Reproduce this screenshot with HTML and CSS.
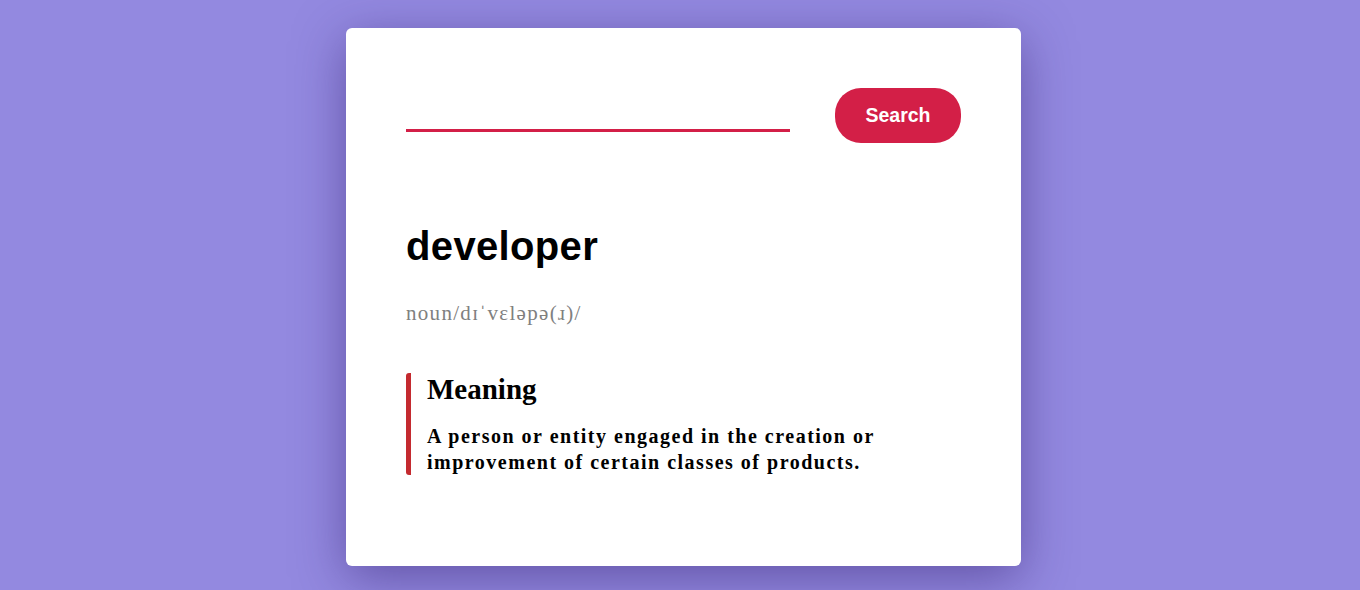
FILE: index.html
```html
<!DOCTYPE html>
<html lang="en">
<head>
<meta charset="utf-8">
<title>Dictionary</title>
<link rel="stylesheet" href="styles.css">
</head>
<body>
  <main class="card">
    <form class="search">
      <input class="search-input" type="text" aria-label="Word">
      <button class="search-btn" type="button">Search</button>
    </form>
    <h1 class="word">developer</h1>
    <p class="phonetic">noun/dɪˈvɛləpə(ɹ)/</p>
    <section class="meaning">
      <h2 class="meaning-title">Meaning</h2>
      <p class="meaning-text">A person or entity engaged in the creation or improvement of certain classes of products.</p>
    </section>
  </main>
</body>
</html>
```
FILE: styles.css
```css
html, body {
  margin: 0;
  padding: 0;
}
body {
  background: #9389e0;
  height: 590px;
  overflow: hidden;
  font-family: "Liberation Serif", serif;
}
.card {
  box-sizing: border-box;
  width: 675px;
  height: 538px;
  margin: 28px 0 0 346px;
  padding: 60px;
  background: #fff;
  border-radius: 6px;
  box-shadow: 0 12px 50px rgba(50, 30, 110, 0.5);
}
.search {
  display: flex;
  align-items: center;
  gap: 45px;
  margin: 0;
}
.search-input {
  box-sizing: border-box;
  width: 384px;
  height: 33px;
  padding: 0;
  border: none;
  border-bottom: 3px solid #d31f47;
  outline: none;
  font-size: 18px;
}
.search-btn {
  width: 126px;
  height: 55px;
  border: none;
  border-radius: 26px;
  background: #d31f47;
  color: #fff;
  font-family: "Liberation Sans", sans-serif;
  font-weight: bold;
  font-size: 19.5px;
  padding: 0;
}
.word {
  margin: 80px 0 0;
  font-family: "Liberation Sans", sans-serif;
  font-weight: bold;
  font-size: 40px;
  line-height: 46px;
  letter-spacing: 0.35px;
  color: #000;
}
.phonetic {
  margin: 32px 0 0;
  font-size: 21px;
  line-height: 24px;
  letter-spacing: 1.3px;
  color: #808080;
}
.meaning {
  margin-top: 48px;
  border-left: 5px solid #c42a2f;
  border-radius: 3px;
  padding-left: 16px;
}
.meaning-title {
  margin: 0 0 17px;
  font-size: 29px;
  line-height: 33px;
  font-weight: bold;
}
.meaning-text {
  margin: 0;
  font-size: 20px;
  font-weight: bold;
  line-height: 26px;
  letter-spacing: 1.5px;
}
```
